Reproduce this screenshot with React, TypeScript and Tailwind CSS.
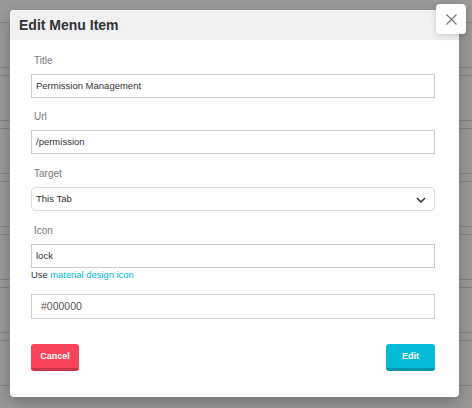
import React from "react";

const rows = [0, 1, 2, 3, 4, 5, 6];

function Label({ text, top }: { text: string; top: string }) {
  return (
    <div className={`${top} mb-[6px] pl-[3px] text-[10px] leading-[14px] text-[#777]`}>
      {text}
    </div>
  );
}

export default function App() {
  return (
    <div
      className="relative h-[408px] w-[472px] overflow-hidden bg-white"
      style={{ fontFamily: '"Liberation Sans", Arial, sans-serif' }}
    >
      {/* page behind the modal */}
      <div className="flex flex-col pt-[22px]">
        {rows.map((r) => (
          <div key={r} className="mb-[7px] h-[46px] border-y border-[#ddd]" />
        ))}
      </div>

      {/* overlay */}
      <div className="absolute inset-0 bg-black/40">
        <div className="absolute left-[10px] top-[10px] w-[449px] rounded-[4px] bg-white shadow-[0_6px_16px_rgba(0,0,0,0.25)]">
          <div className="flex h-[30px] items-center rounded-t-[4px] bg-[#f1f1f1] px-[9px] text-[14px] font-bold text-[#333]">
            Edit Menu Item
          </div>

          <div className="flex flex-col pb-[26px] pl-[21px] pr-[24px] pt-[14px]">
            <Label text="Title" top="mt-0" />
            <div className="flex h-[24px] items-center border border-[#ccc] px-[4px] text-[9.5px] text-[#333]">
              Permission Management
            </div>

            <Label text="Url" top="mt-[12px]" />
            <div className="flex h-[24px] items-center border border-[#ccc] px-[4px] text-[9.5px] text-[#333]">
              /permission
            </div>

            <Label text="Target" top="mt-[13px]" />
            <div className="flex h-[24px] items-center justify-between rounded-[4px] border border-[#ddd] pl-[4px] pr-[8px] pt-[1px] text-[9.5px] text-[#333]">
              <span>This Tab</span>
              <svg width="10" height="6" viewBox="0 0 10 6" fill="none">
                <path d="M1 1l4 4 4-4" stroke="#333" strokeWidth="1.5" />
              </svg>
            </div>

            <Label text="Icon" top="mt-[13px]" />
            <div className="flex h-[24px] items-center border border-[#ccc] px-[4px] text-[9.5px] text-[#333]">
              lock
            </div>
            <div className="text-[9.4px] leading-[14px] text-[#333]">
              Use <span className="text-[#00bcd4]">material design icon</span>
            </div>

            <div className="mt-[12px] flex h-[25px] items-center border border-[#ccd1d6] pl-[9px] text-[10.5px] text-[#555]">
              #000000
            </div>

            <div className="mt-[25px] flex justify-between">
              <button className="flex h-[27px] w-[48px] items-center justify-center rounded-[3px] border-b-[3px] border-[#c9344a] bg-[#fa4459] pt-[2px] text-[9px] font-bold text-white">
                Cancel
              </button>
              <button className="flex h-[27px] w-[49px] items-center justify-center rounded-[3px] border-b-[3px] border-[#0896a8] bg-[#06bcd4] pt-[2px] text-[9px] font-bold text-white">
                Edit
              </button>
            </div>
          </div>
        </div>

        <button className="absolute left-[436px] top-[4px] flex h-[30px] w-[30px] items-center justify-center rounded-[4px] bg-white shadow-[0_2px_6px_rgba(0,0,0,0.15)]">
          <svg width="11" height="11" viewBox="0 0 11 11" fill="none">
            <path d="M0.5 0.5l10 10M10.5 0.5l-10 10" stroke="#777" strokeWidth="1.2" />
          </svg>
        </button>
      </div>
    </div>
  );
}
